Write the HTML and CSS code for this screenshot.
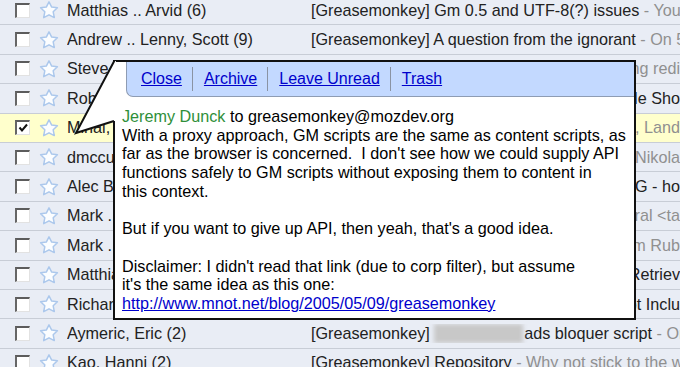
FILE: index.html
```html
<!DOCTYPE html>
<html>
<head>
<meta charset="utf-8">
<link rel="stylesheet" href="styles.css">
</head>
<body>
<div class="list">
  <div class="row"><span class="cb"></span><svg class="star" viewBox="0 0 20 20"><polygon points="10,1.8 12.7,7.1 18.4,7.8 14.2,11.8 15.3,17.6 10,14.8 4.7,17.6 5.8,11.8 1.6,7.8 7.3,7.1"/></svg><span class="name">Matthias .. Arvid (6)</span><span class="subj"><span class="txt">[Greasemonkey] Gm 0.5 and UTF-8(?) issues<span class="snip"> - You might want to check the encoding</span></span></span></div>
  <div class="row"><span class="cb"></span><svg class="star" viewBox="0 0 20 20"><polygon points="10,1.8 12.7,7.1 18.4,7.8 14.2,11.8 15.3,17.6 10,14.8 4.7,17.6 5.8,11.8 1.6,7.8 7.3,7.1"/></svg><span class="name">Andrew .. Lenny, Scott (9)</span><span class="subj"><span class="txt">[Greasemonkey] A question from the ignorant<span class="snip"> - On 5/9/05, Lenny wrote</span></span></span></div>
  <div class="row"><span class="cb"></span><svg class="star" viewBox="0 0 20 20"><polygon points="10,1.8 12.7,7.1 18.4,7.8 14.2,11.8 15.3,17.6 10,14.8 4.7,17.6 5.8,11.8 1.6,7.8 7.3,7.1"/></svg><span class="name">Steve, Jeremy (3)</span><span class="subj tail"><span class="txt">[Greasemonkey] Scripts and redirects<span class="snip"> - I'm seeing a problem when following redi</span></span></span></div>
  <div class="row"><span class="cb"></span><svg class="star" viewBox="0 0 20 20"><polygon points="10,1.8 12.7,7.1 18.4,7.8 14.2,11.8 15.3,17.6 10,14.8 4.7,17.6 5.8,11.8 1.6,7.8 7.3,7.1"/></svg><span class="name">Rob, Aaron (2)</span><span class="subj tail"><span class="txt">[Greasemonkey] Userscript for Google Sho</span></span></div>
  <div class="row sel"><span class="cb on"><svg viewBox="0 0 12 12"><path d="M2.5 5.5 L5 8.5 L10 2.5"/></svg></span><svg class="star" viewBox="0 0 20 20"><polygon points="10,1.8 12.7,7.1 18.4,7.8 14.2,11.8 15.3,17.6 10,14.8 4.7,17.6 5.8,11.8 1.6,7.8 7.3,7.1"/></svg><span class="name">Mihai, Jeremy (5)</span><span class="subj tail"><span class="txt">[Greasemonkey] GM scripts and content<span class="snip"> - Jeremy, Aaron, Land</span></span></span></div>
  <div class="row"><span class="cb"></span><svg class="star" viewBox="0 0 20 20"><polygon points="10,1.8 12.7,7.1 18.4,7.8 14.2,11.8 15.3,17.6 10,14.8 4.7,17.6 5.8,11.8 1.6,7.8 7.3,7.1"/></svg><span class="name">dmccunney (2)</span><span class="subj tail"><span class="txt">[Greasemonkey] Script request<span class="snip"> - Thanks for the help, Nikola</span></span></span></div>
  <div class="row"><span class="cb"></span><svg class="star" viewBox="0 0 20 20"><polygon points="10,1.8 12.7,7.1 18.4,7.8 14.2,11.8 15.3,17.6 10,14.8 4.7,17.6 5.8,11.8 1.6,7.8 7.3,7.1"/></svg><span class="name">Alec Barrett (3)</span><span class="subj tail"><span class="txt">[Greasemonkey] Inserting SVG - ho</span></span></div>
  <div class="row"><span class="cb"></span><svg class="star" viewBox="0 0 20 20"><polygon points="10,1.8 12.7,7.1 18.4,7.8 14.2,11.8 15.3,17.6 10,14.8 4.7,17.6 5.8,11.8 1.6,7.8 7.3,7.1"/></svg><span class="name">Mark .. Aaron (4)</span><span class="subj tail"><span class="txt">[Greasemonkey] Script list<span class="snip"> - On 5/9/05, Tara Garal &lt;ta</span></span></span></div>
  <div class="row"><span class="cb"></span><svg class="star" viewBox="0 0 20 20"><polygon points="10,1.8 12.7,7.1 18.4,7.8 14.2,11.8 15.3,17.6 10,14.8 4.7,17.6 5.8,11.8 1.6,7.8 7.3,7.1"/></svg><span class="name">Mark .. Nikolai (3)</span><span class="subj tail"><span class="txt">[Greasemonkey] New release<span class="snip"> - a note from Tom Rub</span></span></span></div>
  <div class="row"><span class="cb"></span><svg class="star" viewBox="0 0 20 20"><polygon points="10,1.8 12.7,7.1 18.4,7.8 14.2,11.8 15.3,17.6 10,14.8 4.7,17.6 5.8,11.8 1.6,7.8 7.3,7.1"/></svg><span class="name">Matthias .. Jeremy (4)</span><span class="subj tail"><span class="txt">[Greasemonkey] Cannot Retriev</span></span></div>
  <div class="row"><span class="cb"></span><svg class="star" viewBox="0 0 20 20"><polygon points="10,1.8 12.7,7.1 18.4,7.8 14.2,11.8 15.3,17.6 10,14.8 4.7,17.6 5.8,11.8 1.6,7.8 7.3,7.1"/></svg><span class="name">Richard .. Aaron (3)</span><span class="subj tail"><span class="txt">[Greasemonkey] Userscript Inclu</span></span></div>
  <div class="row"><span class="cb"></span><svg class="star" viewBox="0 0 20 20"><polygon points="10,1.8 12.7,7.1 18.4,7.8 14.2,11.8 15.3,17.6 10,14.8 4.7,17.6 5.8,11.8 1.6,7.8 7.3,7.1"/></svg><span class="name">Aymeric, Eric (2)</span><span class="subj"><span class="txt">[Greasemonkey] <span class="blur"></span>ads bloquer script<span class="snip"> - On 5/9/05, Eric wrote</span></span></span></div>
  <div class="row"><span class="cb"></span><svg class="star" viewBox="0 0 20 20"><polygon points="10,1.8 12.7,7.1 18.4,7.8 14.2,11.8 15.3,17.6 10,14.8 4.7,17.6 5.8,11.8 1.6,7.8 7.3,7.1"/></svg><span class="name">Kao, Hanni (2)</span><span class="subj"><span class="txt">[Greasemonkey] Repository<span class="snip"> - Why not stick to the way it was</span></span></span></div>
</div>

<div class="popup">
  <div class="phead">
    <a href="#">Close</a><span class="sep"></span>
    <a href="#">Archive</a><span class="sep"></span>
    <a href="#">Leave Unread</a><span class="sep"></span>
    <a href="#">Trash</a>
  </div>
  <div class="pbody"><span class="from">Jeremy Dunck</span> to greasemonkey@mozdev.org
With a proxy approach, GM scripts are the same as content scripts, as
far as the browser is concerned.  I don't see how we could supply API
functions safely to GM scripts without exposing them to content in
this context.

But if you want to give up API, then yeah, that's a good idea.

Disclaimer: I didn't read that link (due to corp filter), but assume
it's the same idea as this one:
<a href="#">http://www.mnot.net/blog/2005/05/09/greasemonkey</a></div>
</div>

<svg class="pointer" viewBox="0 0 50 85" width="50" height="85">
  <polygon class="pfill" points="44,6 46,6 46,66 44,66 6,78"/>
  <polyline class="pline" points="44.5,5.5 6,78 44,66"/>
</svg>
</body>
</html>
```
FILE: styles.css
```css
html, body {
  margin: 0;
  height: 100%;
  overflow: hidden;
}
body {
  position: relative;
  font-family: "Liberation Sans", Arial, sans-serif;
  font-size: 16.2px;
  color: #222;
  background: #fff;
}
.list {
  margin-top: -4px;
}
.row {
  display: flex;
  align-items: center;
  height: 28.4px;
  padding-left: 15px;
  background: #e9edf5;
  border-bottom: 1px solid #c8cdd6;
  white-space: nowrap;
  overflow: hidden;
}
.row.sel {
  background: #ffffcc;
}
.cb {
  flex: none;
  position: relative;
  width: 12px;
  height: 12px;
  background: #fff;
  border-top: 2px solid #5c5c5c;
  border-left: 2px solid #666;
  border-right: 1px solid #e2e2e2;
  border-bottom: 1px solid #e2e2e2;
}
.cb svg {
  display: block;
  width: 12px;
  height: 12px;
}
.cb path {
  fill: none;
  stroke: #111;
  stroke-width: 2;
}
.star {
  flex: none;
  width: 20px;
  height: 20px;
  margin-left: 9px;
}
.star polygon {
  fill: #fbfdff;
  stroke: #acc8ec;
  stroke-width: 1.5;
  stroke-linejoin: round;
}
.name {
  flex: none;
  width: 238px;
  margin-left: 8px;
  overflow: hidden;
}
.subj {
  flex: 1;
  min-width: 0;
  margin-left: 6px;
  display: flex;
  overflow: hidden;
}
.subj.tail {
  justify-content: flex-end;
}
.txt {
  flex: none;
}
.snip {
  color: #909090;
}
.blur {
  display: inline-block;
  width: 89px;
  height: 19px;
  margin-right: 1px;
  vertical-align: -4px;
  background: #c8c8c8;
  filter: blur(2px);
}

.popup {
  position: absolute;
  left: 113px;
  top: 60px;
  width: 519px;
  height: 256px;
  background: #fff;
  border: 2px solid #111;
}
.phead {
  display: flex;
  align-items: center;
  height: 34px;
  margin-left: 11px;
  padding-left: 14px;
  background: #c3d9ff;
  border-left: 1px solid #8e9cb3;
  border-bottom: 1px solid #8e9cb3;
  border-bottom-left-radius: 7px;
  font-size: 16px;
}
.phead a {
  color: #0000cc;
  text-decoration: underline;
}
.sep {
  width: 1px;
  height: 24px;
  margin: 0 11px 0 10px;
  background: #8a93a3;
}
.pbody {
  padding: 10px 0 0 7px;
  line-height: 18.7px;
  white-space: pre;
  color: #000;
}
.from {
  color: #2f8f3a;
}
.pbody a {
  color: #0000cc;
}
.pointer {
  position: absolute;
  left: 70px;
  top: 55px;
}
.pfill {
  fill: #fff;
}
.pline {
  fill: none;
  stroke: #111;
  stroke-width: 2;
  stroke-linejoin: miter;
}
```
